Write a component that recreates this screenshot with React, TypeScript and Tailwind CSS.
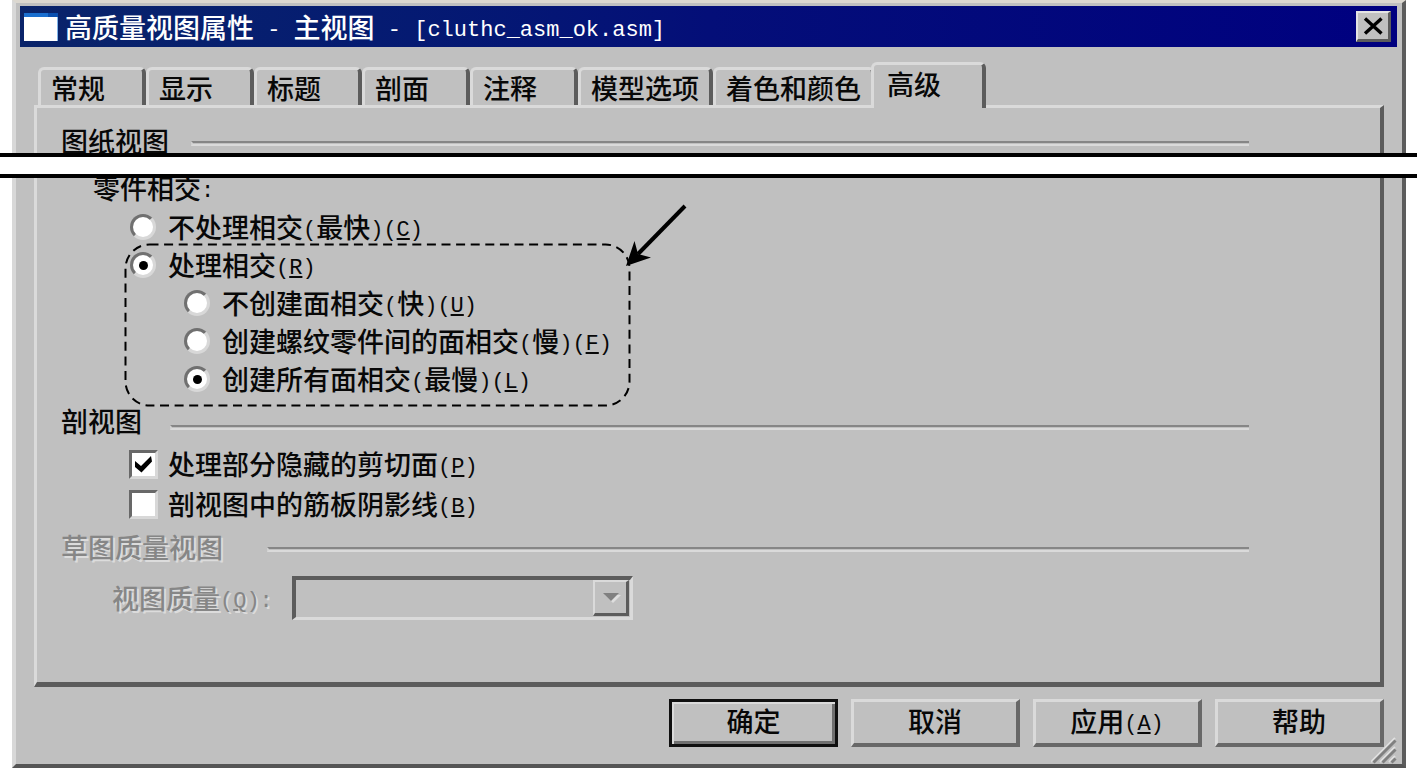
import type { ReactNode } from "react";

const Mono = ({ children }: { children: ReactNode }) => (
  <span className="whitespace-pre align-[2px] font-['Liberation_Mono','Noto_Sans_CJK_SC',monospace] text-[22px] leading-none">
    {children}
  </span>
);

const Key = ({ letter }: { letter: string }) => (
  <Mono>
    (<span className="underline decoration-2 underline-offset-2">{letter}</span>)
  </Mono>
);

const tabs = ["常规", "显示", "标题", "剖面", "注释", "模型选项", "着色和颜色"];

function Tabs() {
  return (
    <div role="tablist" className="mt-[15px] flex h-[43px] items-end pl-1">
      {tabs.map((name) => (
        <button
          key={name}
          role="tab"
          aria-selected={false}
          className="flex h-[38px] min-w-[108px] items-center whitespace-nowrap rounded-t-md border-l-[3px] border-r-4 border-t-[3px] border-l-[#dadada] border-r-[#5c5c5c] border-t-[#dadada] px-[10px]"
        >
          {name}
        </button>
      ))}
      <button
        role="tab"
        aria-selected={true}
        className="relative -mb-[3px] -ml-1 flex h-[46px] w-[115px] items-start rounded-t-md border-l-[3px] border-r-4 border-t-[3px] border-l-[#dadada] border-r-[#5c5c5c] border-t-[#dadada] bg-[#c0c0c0] px-[13px] pt-[3px]"
      >
        高级
      </button>
    </div>
  );
}

function Heading({ children, rule, muted = false }: { children: ReactNode; rule: string; muted?: boolean }) {
  return (
    <h2 className="flex h-[46px] items-center pl-6 pr-[131px]">
      <span
        className={
          muted
            ? "whitespace-nowrap text-[#868686] [text-shadow:2px_2px_0_#dcdcdc]"
            : "whitespace-nowrap"
        }
      >
        {children}
      </span>
      <span className={`${rule} h-[5px] flex-1 border-b-2 border-l-2 border-t-2 border-b-[#dadada] border-l-[#d0d0d0] border-t-[#868686]`} />
    </h2>
  );
}

function Radio({ name, checked = false, children }: { name: string; checked?: boolean; children: ReactNode }) {
  return (
    <label className="flex h-[38px] items-center gap-3 whitespace-nowrap">
      <input
        type="radio"
        name={name}
        defaultChecked={checked}
        className="flex size-[26px] shrink-0 appearance-none items-center justify-center rounded-full border-[3px] border-b-[#d8d8d8] border-l-[#707070] border-r-[#d8d8d8] border-t-[#707070] bg-white checked:before:size-[9px] checked:before:rounded-full checked:before:bg-black checked:before:content-['']"
      />
      <span>{children}</span>
    </label>
  );
}

function Check({ checked = false, children }: { checked?: boolean; children: ReactNode }) {
  return (
    <label className="flex h-10 items-center gap-[10px] whitespace-nowrap">
      <span className="relative flex size-[29px] shrink-0">
        <input
          type="checkbox"
          defaultChecked={checked}
          className="peer size-[29px] appearance-none border-[3px] border-b-[#d8d8d8] border-l-[#686868] border-r-[#d8d8d8] border-t-[#686868] bg-white"
        />
        <svg viewBox="0 0 29 29" className="pointer-events-none absolute inset-0 hidden peer-checked:block">
          <path d="M6 11 L12 16 L22 6 L23 11.500 L12.500 22.500 L6 17 Z" fill="#000" />
        </svg>
      </span>
      <span>{children}</span>
    </label>
  );
}

function Callout() {
  return (
    <svg width="580" height="214" viewBox="0 0 580 214" className="pointer-events-none absolute -top-[46px] left-[83px]">
      <rect x="5.5" y="44.5" width="504" height="161" rx="24" fill="none" stroke="#000" strokeWidth="2" strokeDasharray="9 5.6" />
      <path d="M565 6 L518 54" stroke="#000" strokeWidth="4" />
      <path d="M506 66 L514.500 41 L518 54 L531 57.500 Z" fill="#000" />
    </svg>
  );
}

const raised =
  "flex h-12 w-[169px] items-center justify-center whitespace-nowrap border-b-4 border-l-[3px] border-r-4 border-t-[3px] border-b-[#686868] border-l-[#dadada] border-r-[#686868] border-t-[#dadada] pb-1";

export default function App() {
  return (
    <div className="relative min-h-screen bg-white font-['Noto_Sans_CJK_SC',sans-serif] text-[27px] font-medium leading-[32px] text-[#080808]">
      <main className="relative ml-3 mr-[11px] border-b-4 border-l-4 border-r-4 border-t-[3px] border-b-[#555] border-l-[#d8d8d8] border-r-[#5c5c5c] border-t-[#dcd8d0] bg-[#c0c0c0]">
        <header className="ml-1 mr-[5px] mt-[3px] flex h-[41px] items-center bg-gradient-to-r from-[#0a246a] via-[#040e78] to-[#000080] pl-1 pr-[6px]">
          <svg width="34" height="28" viewBox="0 0 34 28" className="shrink-0">
            <rect width="34" height="28" fill="#fff" />
            <rect width="34" height="4" fill="#1a6fd0" />
            <rect x="24" width="10" height="4" fill="#0a50b0" />
            <path d="M33.500 4 V28" stroke="#7fb4ea" />
          </svg>
          <h1 className="ml-[7px] flex-1 whitespace-nowrap text-white">
            高质量视图属性<Mono>{" - "}</Mono>主视图<Mono>{" - [cluthc_asm_ok.asm]"}</Mono>
          </h1>
          <button
            aria-label="关闭"
            className="flex h-[31px] w-[35px] items-center justify-center border-b-[3px] border-l-2 border-r-[3px] border-t-2 border-b-[#5c5c5c] border-l-[#e4e4e4] border-r-[#5c5c5c] border-t-[#e4e4e4] bg-[#c0c0c0]"
          >
            <svg width="20" height="18" viewBox="0 0 20 18">
              <path d="M2 1.500 L18.500 16.500 M18.500 1.500 L2 16.500" stroke="#000" strokeWidth="3.400" />
            </svg>
          </button>
        </header>

        <div className="ml-[18px] mr-[18px]">
          <Tabs />
          <section
            role="tabpanel"
            aria-label="高级"
            className="border-b-[5px] border-l-[3px] border-r-4 border-t-[3px] border-b-[#5c5c5c] border-l-[#dadada] border-r-[#5c5c5c] border-t-[#dadada] pb-[62px] pt-[10px]"
          >
            <Heading rule="ml-[22px] mt-1">图纸视图</Heading>
            <div role="radiogroup" aria-label="零件相交" className="mt-[6px]">
              <div className="h-[38px] pl-14 pt-[2px]">
                零件相交<Mono>:</Mono>
              </div>
              <div className="pl-[93px]">
                <Radio name="intersect">
                  不处理相交<Mono>(</Mono>最快<Mono>)</Mono>
                  <Key letter="C" />
                </Radio>
              </div>
              <div className="relative pl-[93px]">
                <Radio name="intersect" checked>
                  处理相交
                  <Key letter="R" />
                </Radio>
                <div className="pl-[54px]">
                  <Radio name="faces">
                    不创建面相交<Mono>(</Mono>快<Mono>)</Mono>
                    <Key letter="U" />
                  </Radio>
                  <Radio name="faces">
                    创建螺纹零件间的面相交<Mono>(</Mono>慢<Mono>)</Mono>
                    <Key letter="F" />
                  </Radio>
                  <Radio name="faces" checked>
                    创建所有面相交<Mono>(</Mono>最慢<Mono>)</Mono>
                    <Key letter="L" />
                  </Radio>
                </div>
                <Callout />
              </div>
            </div>

            <Heading rule="ml-7 mt-3">剖视图</Heading>
            <div className="pl-[92px]">
              <Check checked>
                处理部分隐藏的剪切面
                <Key letter="P" />
              </Check>
              <Check>
                剖视图中的筋板阴影线
                <Key letter="B" />
              </Check>
            </div>

            <Heading rule="ml-11 mt-1" muted>
              草图质量视图
            </Heading>
            <div className="mt-[6px] flex h-11 items-center pl-[75px]">
              <label
                htmlFor="quality"
                className="w-[180px] whitespace-nowrap text-[#868686] [text-shadow:2px_2px_0_#dcdcdc]"
              >
                视图质量
                <Key letter="Q" />
                <Mono>:</Mono>
              </label>
              <div className="relative h-11 w-[341px]">
                <select
                  id="quality"
                  disabled
                  className="h-11 w-full appearance-none border-b-[3px] border-l-4 border-r-[3px] border-t-4 border-b-[#dadada] border-l-[#5c5c5c] border-r-[#dadada] border-t-[#5c5c5c] bg-[#c0c0c0] opacity-100"
                />
                <span className="pointer-events-none absolute right-1 top-1 flex h-9 w-[36px] items-center justify-center border-b-[3px] border-l-2 border-r-[3px] border-t-2 border-b-[#5c5c5c] border-l-[#dadada] border-r-[#5c5c5c] border-t-[#dadada]">
                  <svg width="20" height="14" viewBox="0 0 20 14">
                    <path d="M4 4 H20 L12 12 Z" fill="#dedede" />
                    <path d="M2 2 H18 L10 10 Z" fill="#808080" />
                  </svg>
                </span>
              </div>
            </div>
          </section>
        </div>

        <footer className="flex justify-end gap-[13px] pb-[17px] pr-[18px] pt-3">
          <button className="flex h-12 w-[169px] items-center justify-center whitespace-nowrap border-[3px] border-[#101010] pb-1 shadow-[inset_2px_2px_0_#dadada,inset_-3px_-3px_0_#707070]">
            确定
          </button>
          <button className={raised}>取消</button>
          <button className={raised}>
            <span>
              应用
              <Key letter="A" />
            </span>
          </button>
          <button className={raised}>帮助</button>
        </footer>

        <svg width="26" height="28" viewBox="0 0 26 28" className="pointer-events-none absolute bottom-0 right-[5px]">
          <path d="M0 26 L24 2 M9 26 L24 11 M18 26 L24 20" stroke="#e0e0e0" strokeWidth="2" />
          <path d="M2.500 26.500 L24.500 4.500 M11.500 26.500 L24.500 13.500 M20.500 26.500 L24.500 22.500" stroke="#808080" strokeWidth="3" />
        </svg>
      </main>

      <div aria-hidden="true" className="absolute inset-x-0 top-[153px] h-[25px] border-y-4 border-black bg-white" />
    </div>
  );
}
